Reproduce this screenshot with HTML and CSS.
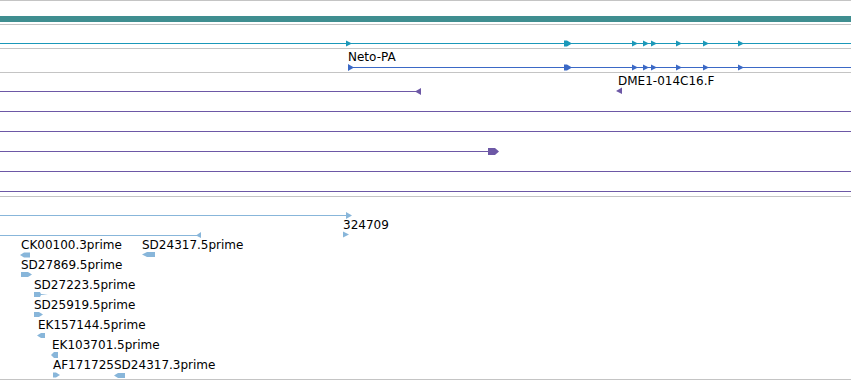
FILE: index.html
```html
<!DOCTYPE html>
<html lang="en">
<head>
  <meta charset="UTF-8">
  <title>Track view</title>
  <link rel="stylesheet" href="styles.css">
</head>
<body>
  <div class="browser">

    <!-- reference sequence -->
    <div class="track track-ref">
      <svg width="851" height="23" viewBox="0 1 851 23">
        <rect class="ref-bar" x="0" y="16" width="851" height="6"/>
      </svg>
    </div>

    <!-- gene -->
    <div class="track track-small">
      <svg width="851" height="23" viewBox="0 25 851 23">
        <g class="cyan">
          <line x1="0" y1="43.5" x2="851" y2="43.5"/>
          <polygon points="346,40.5 352,43.5 346,46.5"/>
          <polygon points="564,40.5 567,40.5 572,43.5 567,46.5 564,46.5"/>
          <polygon points="632,40.5 638,43.5 632,46.5"/>
          <polygon points="643,40.5 649,43.5 643,46.5"/>
          <polygon points="651,40.5 657,43.5 651,46.5"/>
          <polygon points="676,40.5 682,43.5 676,46.5"/>
          <polygon points="703,40.5 709,43.5 703,46.5"/>
          <polygon points="738,40.5 744,43.5 738,46.5"/>
        </g>
      </svg>
    </div>

    <!-- transcript -->
    <div class="track track-small">
      <svg width="851" height="23" viewBox="0 49 851 23">
        <text x="348" y="61">Neto-PA</text>
        <g class="blue">
          <line x1="348" y1="67.5" x2="851" y2="67.5"/>
          <polygon points="348,64 354,67.5 348,71"/>
          <polygon points="564,64.5 567,64.5 572,67.5 567,70.5 564,70.5"/>
          <polygon points="632,64.5 638,67.5 632,70.5"/>
          <polygon points="643,64.5 649,67.5 643,70.5"/>
          <polygon points="651,64.5 657,67.5 651,70.5"/>
          <polygon points="676,64.5 682,67.5 676,70.5"/>
          <polygon points="703,64.5 709,67.5 703,70.5"/>
          <polygon points="738,64.5 744,67.5 738,70.5"/>
        </g>
      </svg>
    </div>

    <!-- BAC / clone alignments -->
    <div class="track track-clones">
      <svg width="851" height="123" viewBox="0 73 851 123">
        <text x="618" y="85">DME1-014C16.F</text>
        <g class="purple">
          <line x1="0" y1="91.5" x2="416" y2="91.5"/>
          <polygon points="415,91.5 421,88 421,95"/>
          <polygon points="616,91 622,87.5 622,94"/>
          <line x1="0" y1="111.5" x2="851" y2="111.5"/>
          <line x1="0" y1="131.5" x2="851" y2="131.5"/>
          <line x1="0" y1="151.5" x2="489" y2="151.5"/>
          <polygon points="488,148 495,148 499,151.5 495,155 488,155"/>
          <line x1="0" y1="171.5" x2="851" y2="171.5"/>
          <line x1="0" y1="191.5" x2="851" y2="191.5"/>
        </g>
      </svg>
    </div>

    <!-- EST alignments -->
    <div class="track track-est">
      <svg width="851" height="182" viewBox="0 197 851 182">
        <g class="est">
          <line x1="0" y1="215.5" x2="347" y2="215.5"/>
          <polygon points="346,212 352,215.5 346,219"/>
          <polygon points="343,231.5 349,234.5 343,237.5"/>
          <line x1="0" y1="235.5" x2="198" y2="235.5"/>
          <polygon points="196,235.5 201,232 201,238"/>

          <polygon points="20,255 24,252.5 30,252.5 30,257.5 24,257.5"/>
          <polygon points="142,254.5 147,252 155,252 155,257 147,257"/>
          <polygon points="21,272 28,272 32,274.5 28,277 21,277"/>
          <polygon points="34,292 40,292 41,294 48,294.5 41,295 40,297 34,297"/>
          <polygon points="34,312 39,312 43,314.5 39,317 34,317"/>
          <polygon points="37,335.5 41,333 45,333 45,338 41,338"/>
          <polygon points="51,355 54,352 58,352 58,358 54,358"/>
          <polygon points="53,372.5 56,372.5 60,375 56,377.5 53,377.5"/>
          <polygon points="114,375.5 118,373 125,373 125,378 118,378"/>
        </g>
        <text x="343" y="229">324709</text>
        <text x="21" y="249">CK00100.3prime</text>
        <text x="142" y="249">SD24317.5prime</text>
        <text x="21" y="269">SD27869.5prime</text>
        <text x="34" y="289">SD27223.5prime</text>
        <text x="34" y="309">SD25919.5prime</text>
        <text x="38" y="329">EK157144.5prime</text>
        <text x="52" y="349">EK103701.5prime</text>
        <text x="53" y="369">AF171725</text>
        <text x="114" y="369">SD24317.3prime</text>
      </svg>
    </div>

  </div>
</body>
</html>
```

FILE: styles.css
```css
body {
  margin: 0;
  background: #fff;
  font-family: 'DejaVu Sans', sans-serif;
}

.browser {
  width: 851px;
  border-top: 1px solid #c4c4c4;
}

.track {
  border-bottom: 1px solid #c4c4c4;
}

.track svg {
  display: block;
}

.track text {
  font-family: 'DejaVu Sans', sans-serif;
  font-size: 12px;
  fill: #000;
}

.ref-bar {
  fill: #3f8e90;
}

.cyan line { stroke: #1b98b9; stroke-width: 1; }
.cyan polygon { fill: #1b98b9; }

.blue line { stroke: #3b69c6; stroke-width: 1; }
.blue polygon { fill: #3b69c6; }

.purple line { stroke: #6d58a6; stroke-width: 1; }
.purple polygon { fill: #6d58a6; }

.est line { stroke: #88b6da; stroke-width: 1; }
.est polygon { fill: #88b6da; }
```
